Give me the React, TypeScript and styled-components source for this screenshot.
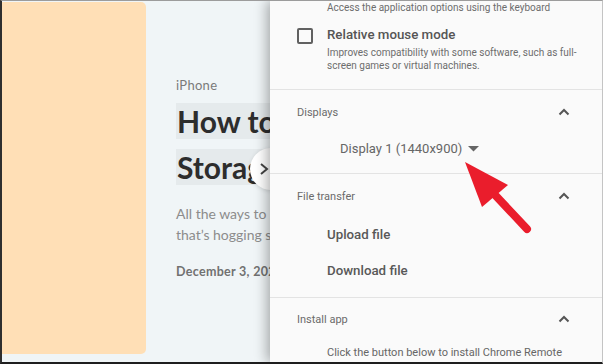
import styled, { createGlobalStyle } from 'styled-components';

const GlobalStyle = createGlobalStyle`
  html, body {
    margin: 0;
    padding: 0;
    background: #ffffff;
  }
`;

const Frame = styled.div`
  position: relative;
  width: 603px;
  height: 364px;
  box-sizing: border-box;
  border-top: 1px solid #9c9c9c;
  border-left: 2px solid #2f2f2f;
  border-bottom: 2px solid #1e1e1e;
  border-right: 1px solid #c4c4c4;
  display: flex;
  overflow: hidden;
`;

/* left side: the article page behind the panel */
const Article = styled.div`
  position: relative;
  flex: 1;
  display: flex;
  background: #f0f5f7;
  overflow: hidden;
  font-family: Lato, "Open Sans", sans-serif;
`;

const Thumb = styled.div`
  flex: 0 0 144px;
  height: 352px;
  margin-top: 1px;
  background: #ffdfb6;
  border-radius: 0 5px 5px 0;
`;

const ArticleText = styled.div`
  flex: 0 0 320px;
  padding: 75px 0 0 30px;
  display: flex;
  flex-direction: column;
`;

const Category = styled.div`
  font-size: 13px;
  color: #7a7a7a;
  line-height: 18px;
  letter-spacing: 0.3px;
`;

const Title = styled.h1`
  margin: 4px 0 0;
  font-size: 30px;
  font-weight: 700;
  line-height: 46px;
  color: #2d2d2d;
  span {
    padding: 0 1px;
    background: #e5eaec;
    box-decoration-break: clone;
    -webkit-box-decoration-break: clone;
  }
`;

const Excerpt = styled.p`
  margin: 13px 0 0;
  font-size: 14px;
  line-height: 21px;
  color: #8c8c8c;
`;

const Date = styled.div`
  margin-top: 19px;
  font-size: 12.5px;
  font-weight: 700;
  color: #717171;
  letter-spacing: 0.3px;
`;

const NextButton = styled.div`
  position: absolute;
  left: 248px;
  top: 147px;
  width: 42px;
  height: 42px;
  border-radius: 50%;
  background: #ffffff;
  box-shadow: 0 1px 4px rgba(0, 0, 0, 0.12);
  display: flex;
  align-items: center;
  padding-left: 9px;
  box-sizing: border-box;
`;

/* right side: the options panel */
const Panel = styled.div`
  position: relative;
  z-index: 1;
  flex: 0 0 332px;
  background: #fafafa;
  box-shadow: -3px 0 12px rgba(0, 0, 0, 0.32);
  display: flex;
  flex-direction: column;
  overflow: hidden;
  font-family: Roboto, "Liberation Sans", sans-serif;
`;

const Hint = styled.div`
  flex-shrink: 0;
  padding-left: 57px;
  font-size: 10px;
  line-height: 13px;
  color: #6d6d6d;
`;

const CheckRow = styled.div`
  flex-shrink: 0;
  display: flex;
  gap: 14px;
  padding: 13px 0 0 27px;
  height: 76px;
  box-sizing: border-box;
  border-bottom: 1px solid #e3e3e3;
`;

const Checkbox = styled.div`
  flex: 0 0 auto;
  width: 12px;
  height: 12px;
  margin-top: 1px;
  border: 2px solid #616161;
  border-radius: 2px;
`;

const CheckLabel = styled.div`
  display: flex;
  flex-direction: column;
`;

const CheckTitle = styled.div`
  font-size: 13.3px;
  line-height: 16px;
  font-weight: 500;
  color: #555555;
`;

const CheckDesc = styled.div`
  margin-top: 3px;
  font-size: 10px;
  line-height: 13px;
  color: #6d6d6d;
`;

const Section = styled.div<{ $height: number }>`
  flex-shrink: 0;
  height: ${p => p.$height}px;
  box-sizing: border-box;
  border-bottom: 1px solid #e3e3e3;
  display: flex;
  flex-direction: column;
`;

const SectionHead = styled.div`
  display: flex;
  align-items: center;
  justify-content: space-between;
  padding: 14px 32px 0 27px;
  height: 16px;
  font-size: 11px;
  color: #6a6a6a;
`;

const Select = styled.div`
  display: flex;
  align-items: center;
  gap: 6px;
  margin: 21px 0 0 70px;
  font-size: 13px;
  color: #666666;
`;

const ActionList = styled.div`
  display: flex;
  flex-direction: column;
  gap: 19px;
  padding: 22px 0 0 57px;
`;

const Action = styled.div`
  font-size: 13.3px;
  line-height: 17px;
  font-weight: 500;
  color: #585858;
`;

const InstallText = styled.div`
  margin: 19px 0 0 57px;
  font-size: 11px;
  line-height: 16px;
  color: #666666;
  width: 255px;
`;

const Annotation = styled.svg`
  position: absolute;
  left: -2px;
  top: -1px;
  z-index: 2;
  pointer-events: none;
`;

const ChevronUp = () => (
  <svg width="12" height="8" viewBox="0 0 12 8">
    <path d="M1.5 6.5 L6 2 L10.5 6.5" fill="none" stroke="#555" strokeWidth="2" />
  </svg>
);

const Caret = () => (
  <svg width="11" height="6" viewBox="0 0 11 6">
    <path d="M0 0 L11 0 L5.5 5.5 Z" fill="#666" />
  </svg>
);

export default function App() {
  return (
    <>
      <GlobalStyle />
      <Frame>
        <Article>
          <Thumb />
          <ArticleText>
            <Category>iPhone</Category>
            <Title>
              <span>How to Clear Other</span>
              <br />
              <span>Storage on iPhone</span>
            </Title>
            <Excerpt>
              All the ways to remove the ‘Other’ data
              <br />
              that’s hogging storage on your iPhone.
            </Excerpt>
            <Date>December 3, 2021</Date>
          </ArticleText>
          <NextButton>
            <svg width="10" height="14" viewBox="0 0 10 14">
              <path d="M2 2 L8 7 L2 12" fill="none" stroke="#444" strokeWidth="2" />
            </svg>
          </NextButton>
        </Article>

        <Panel>
          <Hint>Access the application options using the keyboard</Hint>
          <CheckRow>
            <Checkbox />
            <CheckLabel>
              <CheckTitle>Relative mouse mode</CheckTitle>
              <CheckDesc>
                Improves compatibility with some software, such as full-
                <br />
                screen games or virtual machines.
              </CheckDesc>
            </CheckLabel>
          </CheckRow>

          <Section $height={84}>
            <SectionHead>
              <span>Displays</span>
              <ChevronUp />
            </SectionHead>
            <Select>
              <span>Display 1 (1440x900)</span>
              <Caret />
            </Select>
          </Section>

          <Section $height={124}>
            <SectionHead>
              <span>File transfer</span>
              <ChevronUp />
            </SectionHead>
            <ActionList>
              <Action>Upload file</Action>
              <Action>Download file</Action>
            </ActionList>
          </Section>

          <Section $height={80}>
            <SectionHead>
              <span>Install app</span>
              <ChevronUp />
            </SectionHead>
            <InstallText>
              Click the button below to install Chrome Remote Desktop on this device. When installed, you will
            </InstallText>
          </Section>
        </Panel>

        <Annotation width="603" height="364" viewBox="0 0 603 364">
          <line x1="496" y1="196" x2="527" y2="229" stroke="#ea1d2c" strokeWidth="8" strokeLinecap="round" />
          <polygon points="465,162 482,207 508,185" fill="#ea1d2c" />
        </Annotation>
      </Frame>
    </>
  );
}
